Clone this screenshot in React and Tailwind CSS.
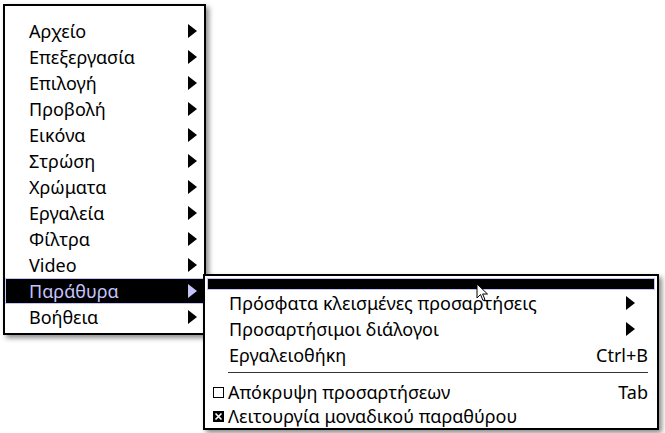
import React from 'react';

// Right-pointing solid triangle used for submenu arrows
const Arrow = ({ color = '#000' }) => (
  <svg width="9" height="14" viewBox="0 0 9 14" className="shrink-0">
    <polygon points="0,0 9,7 0,14" fill={color} />
  </svg>
);

const Cursor = () => (
  <svg width="14" height="20" viewBox="0 0 14 20" className="absolute left-[476px] top-[283px]">
    <path d="M1 1 L1 15 L4.5 11.5 L7 17.5 L9 16.6 L6.6 11 L11.5 11 Z" fill="#fff" stroke="#000" strokeWidth="1" strokeLinejoin="round" />
  </svg>
);

const mainItems = [
  'Αρχείο',
  'Επεξεργασία',
  'Επιλογή',
  'Προβολή',
  'Εικόνα',
  'Στρώση',
  'Χρώματα',
  'Εργαλεία',
  'Φίλτρα',
  'Video',
  'Παράθυρα',
  'Βοήθεια',
];

function MainMenu() {
  return (
    <div className="absolute left-[3px] top-[4px] w-[203px] h-[331px] bg-white border-2 border-black shadow-[3px_3px_5px_rgba(0,0,0,0.45)] pt-[12px]">
      {mainItems.map((label) =>
        label === 'Παράθυρα' ? (
          <div
            key={label}
            className="h-[26px] flex items-center justify-between bg-black border border-[#c4c4fa] pl-[23px] pr-[6px] text-[#c4c4fa]"
          >
            <span>{label}</span>
            <Arrow color="#c4c4fa" />
          </div>
        ) : (
          <div key={label} className="h-[26px] flex items-center justify-between pl-[24px] pr-[7px]">
            <span>{label}</span>
            <Arrow />
          </div>
        )
      )}
    </div>
  );
}

function SubMenu() {
  return (
    <div className="absolute left-[203px] top-[274px] w-[456px] h-[156px] bg-white border-2 border-black shadow-[3px_3px_5px_rgba(0,0,0,0.45)] pt-[2px] px-[2px]">
      <div className="h-[12px] bg-black border border-[#c4c4fa]" />
      <div className="h-[26px] flex items-center justify-between pl-[22px] pr-[20px]">
        <span>Πρόσφατα κλεισμένες προσαρτήσεις</span>
        <Arrow />
      </div>
      <div className="h-[26px] flex items-center justify-between pl-[22px] pr-[20px]">
        <span>Προσαρτήσιμοι διάλογοι</span>
        <Arrow />
      </div>
      <div className="h-[26px] flex items-center justify-between pl-[22px] pr-[7px]">
        <span>Εργαλειοθήκη</span>
        <span>Ctrl+B</span>
      </div>
      <div className="h-[12px] pt-[4px] pl-[21px] pr-[7px]">
        <div className="h-px w-full bg-[#333]" />
      </div>
      <div className="h-[24px] flex items-center justify-between pl-[6px] pr-[7px]">
        <span className="flex items-center">
          <span className="w-[11px] h-[11px] shrink-0 border border-black mr-[4px]" />
          Απόκρυψη προσαρτήσεων
        </span>
        <span>Tab</span>
      </div>
      <div className="h-[24px] flex items-center pl-[6px] pr-[7px]">
        <svg width="11" height="11" viewBox="0 0 11 11" className="mr-[4px] shrink-0">
          <rect x="0" y="0" width="11" height="11" fill="#000" />
          <path d="M2.5 2.5 L8.5 8.5 M8.5 2.5 L2.5 8.5" stroke="#fff" strokeWidth="1.6" />
        </svg>
        Λειτουργία μοναδικού παραθύρου
      </div>
    </div>
  );
}

export default function App() {
  return (
    <div className="relative w-[665px] h-[433px] bg-white overflow-hidden text-[18px] leading-none text-black font-['Noto_Sans',sans-serif]">
      <MainMenu />
      <SubMenu />
      <Cursor />
    </div>
  );
}
